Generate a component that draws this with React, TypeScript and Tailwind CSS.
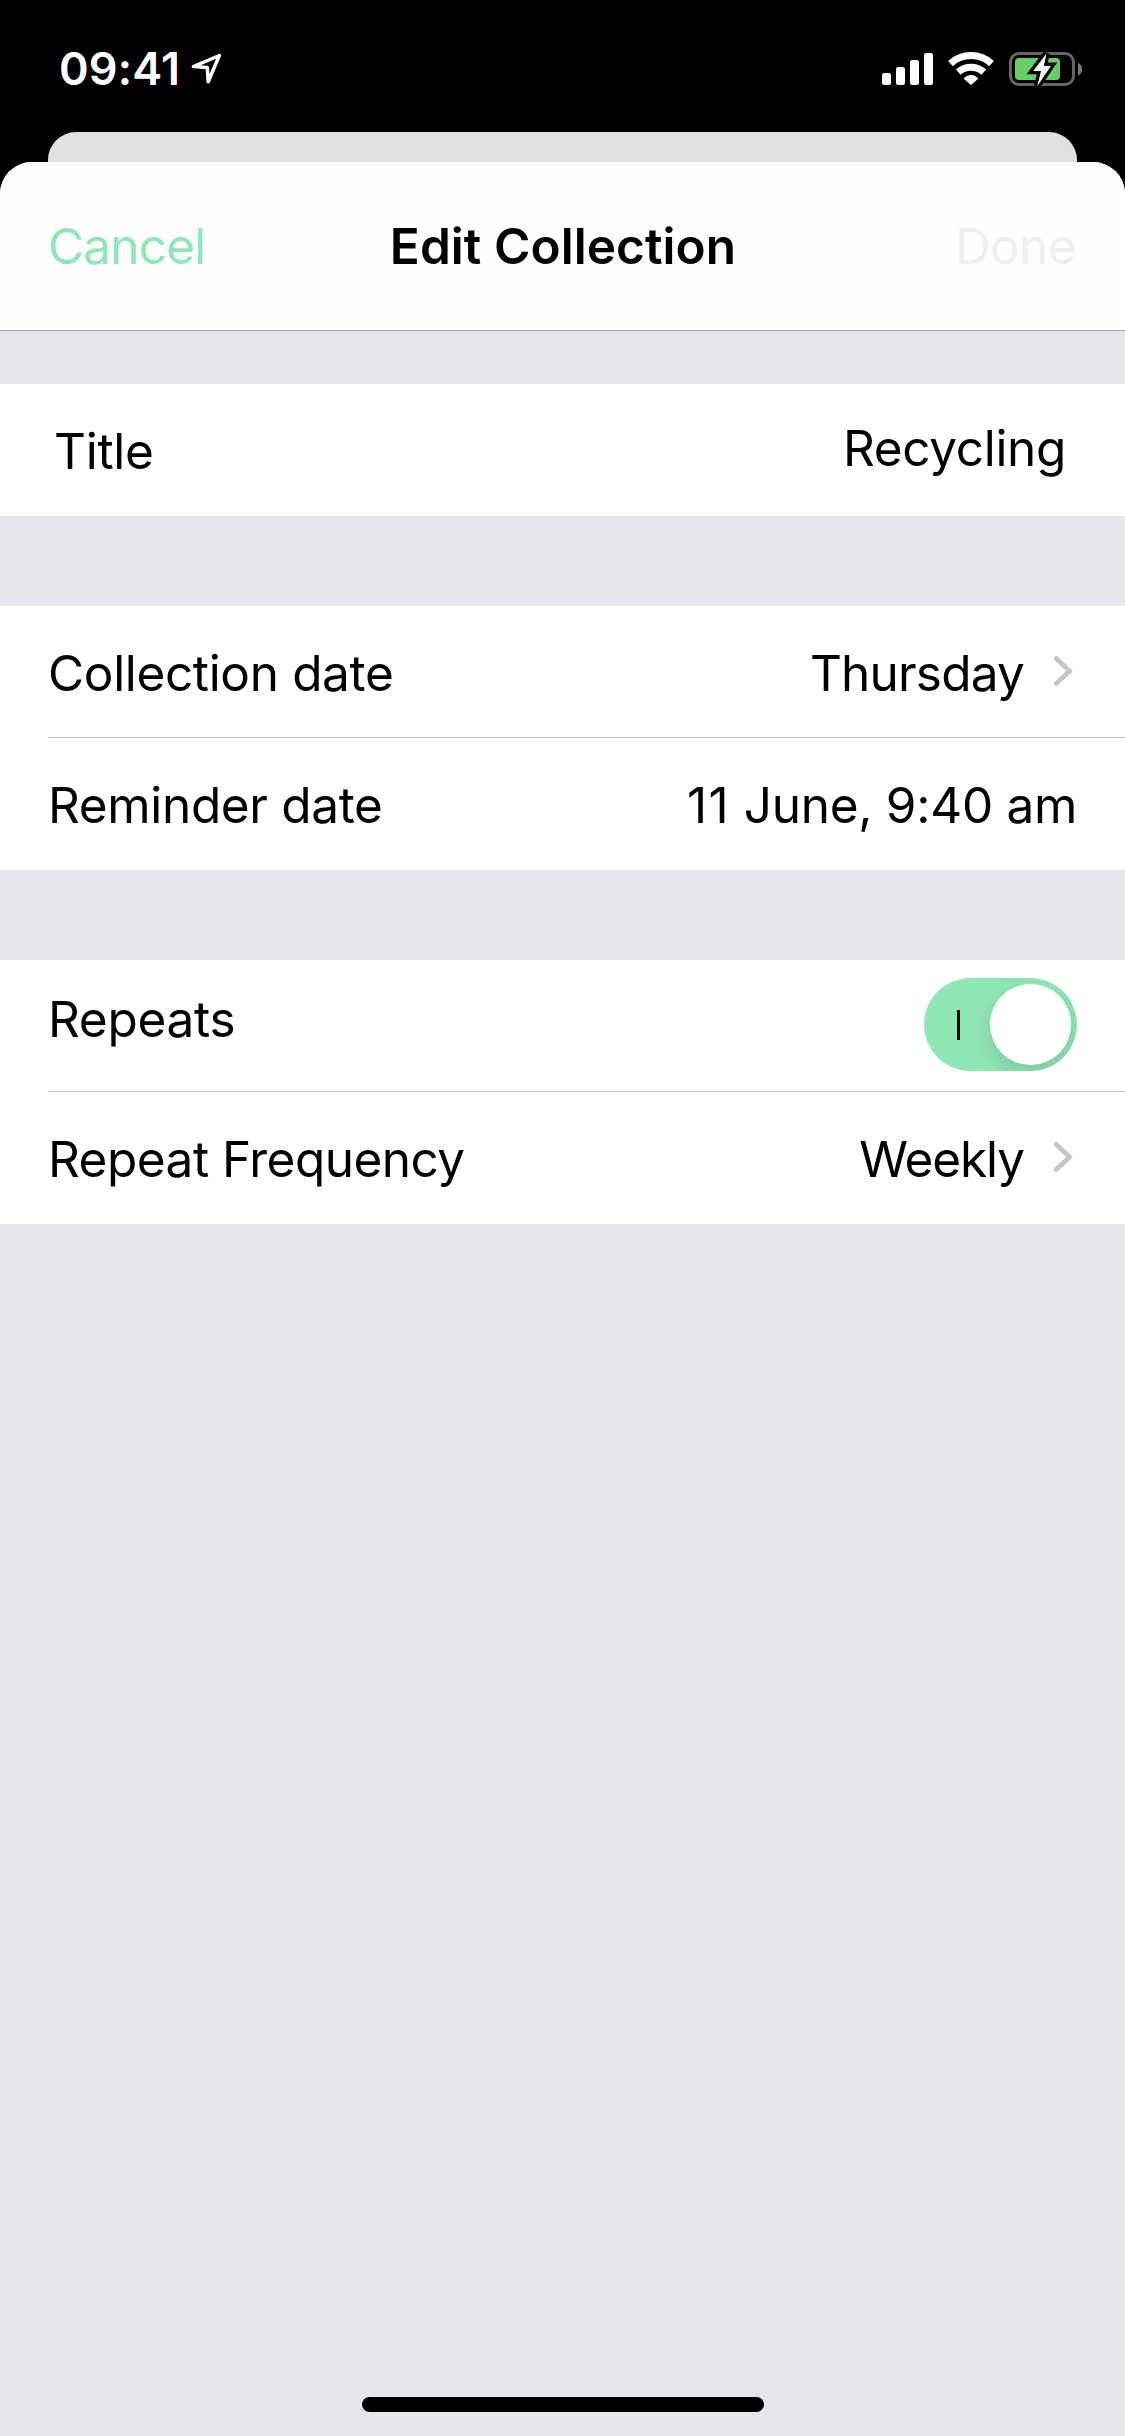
import type { ReactNode } from "react";

function LocationArrow() {
  return (
    <svg className="ml-[10px] h-[36px] w-[32px]" viewBox="190 51 32 36" fill="none">
      <path d="M193.4 66.6 L219.3 55.5 L208.2 81.7 L207.3 67.6 Z" stroke="#fff" strokeWidth="3.5" strokeLinejoin="round" />
    </svg>
  );
}

function StatusIcons() {
  return (
    <svg className="h-[36px] w-[204px]" viewBox="880 51 204 36" fill="none">
      <g fill="#fff">
        <rect x="882" y="73" width="9" height="12" rx="2.2" />
        <rect x="896" y="67" width="9" height="18" rx="2.2" />
        <rect x="910" y="60" width="9" height="25" rx="2.2" />
        <rect x="924" y="53" width="9" height="32" rx="2.2" />
        <path d="M971 85 L964 79 Q963.8 78 964.8 77.3 Q971 72.6 977.2 77.3 Q978.2 78 978 79 Z" />
      </g>
      <g stroke="#fff" strokeWidth="7">
        <path d="M950.5 63.6 A30.3 30.3 0 0 1 991.5 63.6" />
        <path d="M958.2 72.2 A19.2 19.2 0 0 1 983.8 72.2" />
      </g>
      <rect x="1010.5" y="53.5" width="63" height="31" rx="8.5" stroke="#666" strokeWidth="3" />
      <rect x="1015" y="58" width="45" height="22" rx="4" fill="#67ce67" />
      <path d="M1078 62.8 Q1082 65 1082 69.2 Q1082 73.4 1078 75.6 Z" fill="#7b7b7b" />
      <path
        d="M1046.5 53.5 L1033.2 70.9 L1041 70.9 L1037.3 86 L1051 65.9 L1043.8 65.9 Z"
        fill="#fff"
        stroke="#000"
        strokeWidth="6.6"
        paintOrder="stroke"
      />
    </svg>
  );
}

function Chevron() {
  return (
    <svg className="mr-[4px] mb-[2px] ml-[29px] h-[32px] w-[20px]" viewBox="0 0 20 32" fill="none">
      <path d="M3.3 3.4 L16.7 16 L3.3 28.6" stroke="#c5c5c7" strokeWidth="4.8" strokeLinecap="round" strokeLinejoin="round" />
    </svg>
  );
}

function Switch() {
  return (
    <div className="mb-[2px] flex h-[93px] w-[153px] items-center overflow-hidden rounded-full bg-[#90e7b5]">
      <div className="ml-[33px] h-[30px] w-[3px] bg-black" />
      <div className="ml-[30px] size-[81px] rounded-full bg-white shadow-[0_9px_24px_rgba(0,0,0,0.15)]" />
    </div>
  );
}

function Row({ children, tall }: { children: ReactNode; tall?: boolean }) {
  return (
    <div className={`flex items-center justify-between px-[48px] ${tall ? "h-[132px]" : "h-[131px]"}`}>{children}</div>
  );
}

function Divider() {
  return <div className="ml-[48px] h-px bg-[#c6c6c8]" />;
}

export default function App() {
  return (
    <div className="flex h-[2436px] w-[1125px] flex-col bg-black font-['Inter',sans-serif] text-[49.5px] leading-[60px] whitespace-nowrap text-black">
      <div className="flex h-[132px] shrink-0 items-center justify-between pr-[41px] pl-[59px]">
        <div className="flex items-center">
          <span className="pt-[5px] text-[45px] leading-[54px] font-semibold tracking-[0.16px] text-white">09:41</span>
          <div className="pt-[6px]">
            <LocationArrow />
          </div>
        </div>
        <div className="pt-[6px]">
          <StatusIcons />
        </div>
      </div>

      <div className="mx-[48px] h-[30px] shrink-0 rounded-t-[28px] bg-[#e0e0e0]" />

      <div className="flex flex-1 flex-col overflow-hidden rounded-t-[32px] bg-[#e5e5ea]">
        <header className="grid h-[169px] grid-cols-[1fr_auto_1fr] items-center border-b border-[#a3a3a7] bg-[#fefefe] px-[48px]">
          <span className="tracking-[-0.8px] text-[#90e7b5]">Cancel</span>
          <h1 className="pl-px font-semibold tracking-[0.07px]">Edit Collection</h1>
          <span className="pr-px text-right tracking-[-0.6px] text-[#eeeeee]">Done</span>
        </header>

        <section className="mt-[53px] bg-white">
          <Row tall>
            <span className="pt-[2px] pl-[6px] tracking-[-0.28px]">Title</span>
            <span className="pr-[11px] pb-[4px] tracking-[-0.33px]">Recycling</span>
          </Row>
        </section>

        <section className="mt-[90px] bg-white">
          <Row>
            <span className="pt-[3px] tracking-[-0.35px]">Collection date</span>
            <div className="flex items-center">
              <span className="pt-[3px] tracking-[-0.8px]">Thursday</span>
              <Chevron />
            </div>
          </Row>
          <Divider />
          <Row tall>
            <span className="pt-[2px] tracking-[-0.34px]">Reminder date</span>
            <span className="pt-[2px] tracking-[-0.3px]">
              <span className="tracking-[1.5px]">11</span> June, 9:40 am
            </span>
          </Row>
        </section>

        <section className="mt-[90px] bg-white">
          <Row>
            <span className="pb-[13px] tracking-[-0.27px]">Repeats</span>
            <Switch />
          </Row>
          <Divider />
          <Row tall>
            <span className="pt-[2px] tracking-[-0.51px]">Repeat Frequency</span>
            <div className="flex items-center">
              <span className="pt-[2px] tracking-[-1.08px]">Weekly</span>
              <Chevron />
            </div>
          </Row>
        </section>

        <div className="mt-auto mb-[24px] ml-[362px] h-[15px] w-[402px] rounded-full bg-black" />
      </div>
    </div>
  );
}
